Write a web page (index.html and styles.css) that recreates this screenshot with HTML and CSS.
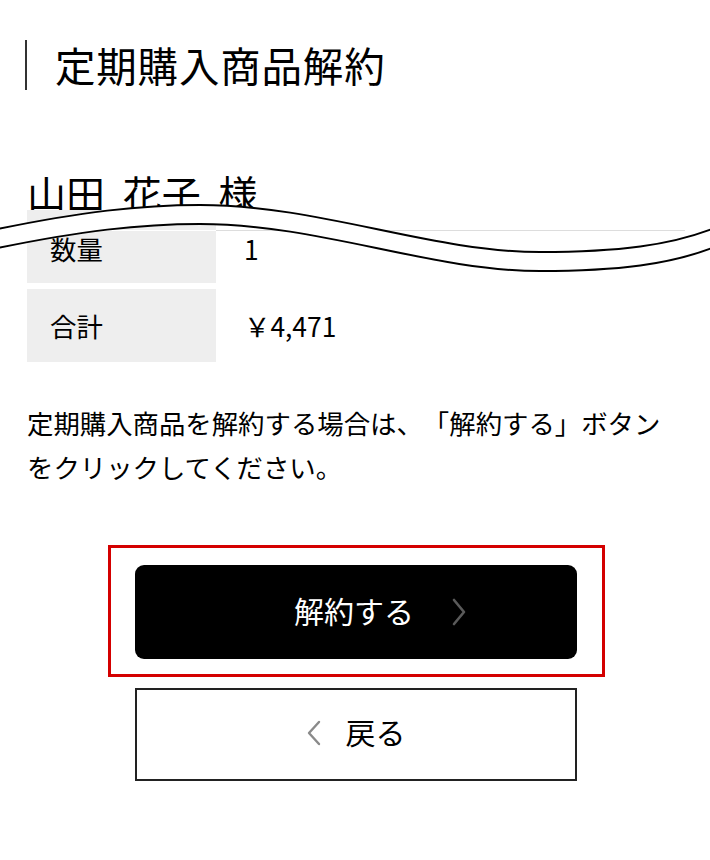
FILE: index.html
```html
<!DOCTYPE html>
<html lang="ja">
<head>
<meta charset="utf-8">
<title>定期購入商品解約</title>
<link rel="stylesheet" href="styles.css">
</head>
<body>
<div class="page">
  <h1 class="title">定期購入商品解約</h1>
  <h2 class="name">山田 花子 様</h2>

  <div class="table">
    <div class="cell label remnant"></div>
    <div class="cell value remnant-value"></div>
    <div class="cell label first">数量</div>
    <div class="cell value first">1</div>
    <div class="cell label row">合計</div>
    <div class="cell value row">￥4,471</div>
  </div>

  <p class="note">定期購入商品を解約する場合は、「解約する」ボタンをクリックしてください。</p>

  <div class="highlight">
    <button class="btn btn-primary" type="button">
      <span class="btn-text">解約する</span>
      <svg class="chev chev-next" width="14" height="28" viewBox="0 0 14 28" aria-hidden="true">
        <polyline points="2,2 12,14 2,26" fill="none" stroke="#5a5a5a" stroke-width="2.6" stroke-linecap="round" stroke-linejoin="round"/>
      </svg>
    </button>
  </div>

  <button class="btn btn-back" type="button">
    <svg class="chev chev-prev" width="14" height="26" viewBox="0 0 14 26" aria-hidden="true">
      <polyline points="12,2 2,13 12,24" fill="none" stroke="#8a8a8a" stroke-width="2.4" stroke-linecap="round" stroke-linejoin="round"/>
    </svg>
    <span class="btn-text">戻る</span>
  </button>

  <svg class="cut" width="710" height="90" viewBox="0 0 710 90" aria-hidden="true">
    <path d="M-2,29 C80,12 140,5 200,5 C320,5 430,52 540,52 C620,52 670,45 712,29 L712,48 C670,64 620,71 540,71 C430,71 320,24 200,24 C140,24 80,31 -2,48 Z" fill="#fff"/>
    <path d="M-2,29 C80,12 140,5 200,5 C320,5 430,52 540,52 C620,52 670,45 712,29" fill="none" stroke="#000" stroke-width="2"/>
    <path d="M-2,48 C80,31 140,24 200,24 C320,24 430,71 540,71 C620,71 670,64 712,48" fill="none" stroke="#000" stroke-width="2"/>
  </svg>
</div>
</body>
</html>
```

FILE: styles.css
```css
html, body {
  margin: 0;
  padding: 0;
  background: #fff;
}

body {
  font-family: "Noto Sans CJK JP", "Noto Sans", sans-serif;
  color: #000;
  text-spacing-trim: space-all;
}

.page {
  position: relative;
  width: 710px;
  min-height: 860px;
  box-sizing: border-box;
  padding: 40px 25px 0 27px;
}

.title {
  margin: 0 0 0 -2px;
  border-left: 2px solid #333;
  padding-left: 28px;
  font-size: 40.5px;
  font-weight: 400;
  line-height: 50px;
  letter-spacing: 0.02em;
}

.name {
  margin: 74px 0 0;
  font-size: 39px;
  font-weight: 400;
  line-height: 56px;
  word-spacing: 9px;
}

.table {
  display: grid;
  grid-template-columns: 189px 1fr;
  margin-top: -10px;
  font-size: 26.4px;
}

.cell {
  display: flex;
  align-items: center;
  line-height: 1.5;
}

.label {
  background: #eeeeee;
  padding-left: 23px;
}

.value {
  padding-left: 28px;
}

.remnant {
  height: 20px;
}

.remnant-value {
  height: 20px;
  border-bottom: 1px solid #dddddd;
}

.first {
  height: 52px;
  box-sizing: border-box;
  padding-bottom: 16px;
}

.label.row,
.value.row {
  margin-top: 6px;
  height: 73px;
}

.note {
  margin: 39px 10px 0 0;
  font-size: 26.4px;
  line-height: 44px;
}

.highlight {
  width: 497px;
  box-sizing: border-box;
  margin: 56px auto 0;
  border: 3px solid #d40000;
  padding: 17px 0 15px;
}

.btn {
  display: flex;
  align-items: center;
  justify-content: center;
  width: 442px;
  box-sizing: border-box;
  margin: 0 auto;
  font-family: inherit;
  font-size: 30px;
  padding: 0;
  cursor: pointer;
}

.btn-primary {
  position: relative;
  height: 94px;
  background: #000;
  color: #fff;
  border: none;
  border-radius: 9px;
}

.btn-primary .btn-text {
  margin-top: -4px;
  margin-right: 4px;
}

.chev-next {
  position: absolute;
  left: 317px;
  top: 33px;
}

.btn-back {
  margin-top: 11px;
  height: 93px;
  background: #fff;
  color: #000;
  border: 2px solid #222;
  gap: 25px;
}

.btn-back .btn-text {
  margin-top: -8px;
}

.chev-prev {
  margin-top: -3px;
}

.cut {
  position: absolute;
  left: 0;
  top: 200px;
}
```
